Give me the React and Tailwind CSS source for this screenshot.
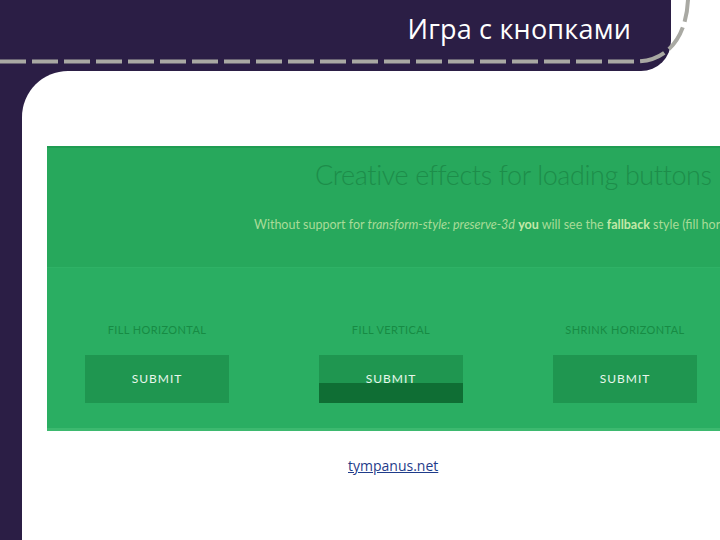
import React from "react";

const columns = [
  { label: "FILL HORIZONTAL", fill: false },
  { label: "FILL VERTICAL", fill: true },
  { label: "SHRINK HORIZONTAL", fill: false },
];

export default function App() {
  return (
    <div className="relative w-[720px] h-[540px] overflow-hidden bg-white font-['Open_Sans',sans-serif]">
      {/* top band with the title */}
      <div className="h-[71px] w-[671px] bg-[#2b1e45] rounded-br-[30px] flex justify-end pr-[40px] pt-[10px]">
        <h1 className="text-white text-[27px] leading-[37px] tracking-[0.2px] font-['Open_Sans',sans-serif]">Игра с кнопками</h1>
      </div>

      {/* left strip + white sheet */}
      <div className="h-[469px] bg-[#2b1e45] pl-[22px]">
        <div className="h-full bg-white rounded-tl-[46px] pt-[75px] pl-[25px] overflow-hidden">
          <div className="w-[926px] h-[285px] flex flex-col">
            <div className="h-[121px] bg-[#27a85c] border-t-[2px] border-[#1f9c52] pt-[9px]">
              <h2 className="pl-[268px] whitespace-nowrap text-[27px] leading-[36px] font-light tracking-[-0.4px] text-[#1d8d4a] font-['Lato',sans-serif]">
                Creative effects for loading buttons
              </h2>
              <p className="pl-[207px] mt-[24px] whitespace-nowrap text-[12.5px] leading-[16px] text-[#a9dc98] font-['Lato',sans-serif]">
                Without support for <em>transform-style: preserve-3d</em> <b className="text-[#c3e8a8]">you</b> will see the{" "}
                <b className="text-[#c3e8a8]">fallback</b> style (fill horizontal)
              </p>
            </div>
            <div className="flex-1 bg-[#2aae62] border-t border-[#2fb266] border-b-[3px] border-b-[#3db96f] pl-[38px] pt-[55px] flex gap-[90px]">
              {columns.map((c) => (
                <div key={c.label} className="w-[144px] flex flex-col items-center">
                  <span className="text-[11px] leading-[14px] tracking-[0.4px] text-[#178b44] whitespace-nowrap font-['Lato',sans-serif]">
                    {c.label}
                  </span>
                  <div className="relative mt-[18px] w-[144px] h-[48px] bg-[#1f9650] flex items-center justify-center">
                    {c.fill && <div className="absolute left-0 right-0 bottom-0 h-[20px] bg-[#0f6e34]" />}
                    <span className="relative text-[12px] tracking-[1px] text-[#e8f6ec] font-['Lato',sans-serif]">SUBMIT</span>
                  </div>
                </div>
              ))}
            </div>
          </div>
          <div className="pl-[301px] mt-[22px]">
            <a href="#" className="text-[14px] leading-[20px] text-[#1f3c8a] underline">tympanus.net</a>
          </div>
        </div>
      </div>

      {/* dashed stitch line over the band */}
      <svg className="absolute top-0 left-0" width="720" height="75" viewBox="0 0 720 75">
        <path
          d="M0 61.5 H 636 C 665 61.5, 686 40, 688 0"
          fill="none"
          stroke="#a9a9a3"
          strokeWidth="4"
          strokeDasharray="26 6"
        />
      </svg>
    </div>
  );
}
